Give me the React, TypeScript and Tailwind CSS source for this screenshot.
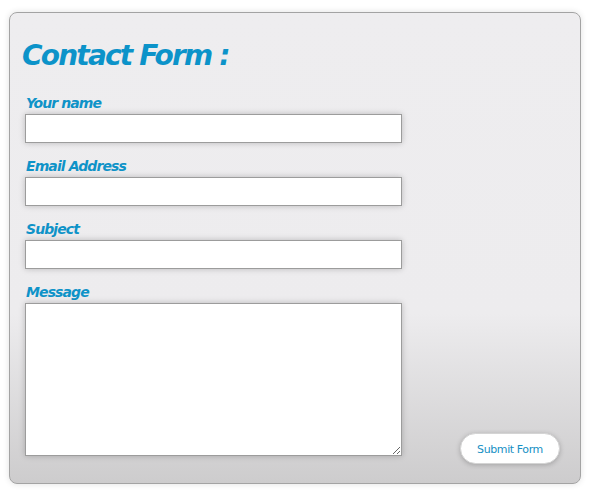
import React from 'react';

const font = { fontFamily: '"DejaVu Sans", Verdana, sans-serif' };

interface FieldProps {
  label: string;
  multiline?: boolean;
}

const Field: React.FC<FieldProps> = ({ label, multiline = false }) => {
  const box = "block w-[377px] bg-white border border-[#9c9c9c] shadow-[0_0_6px_rgba(0,0,0,0.22)] outline-none";
  return (
    <label className="flex flex-col">
      <span className="pl-[1px] pt-[1px] text-[14px] leading-[18px] font-bold italic text-[#0f93c8] tracking-[-0.9px] mb-[2px]">
        {label}
      </span>
      {multiline ? (
        <textarea className={`${box} h-[153px]`} />
      ) : (
        <input type="text" className={`${box} h-[29px]`} />
      )}
    </label>
  );
};

export default function App() {
  return (
    <div className="min-h-[494px] w-[592px] bg-white pt-3 pl-[9px]" style={font}>
      <form
        onSubmit={(e) => e.preventDefault()}
        className="w-[572px] h-[472px] rounded-lg border border-[#a3a3a3] bg-[linear-gradient(to_bottom,#eeedef_0%,#edecee_64%,#cdcccd_100%)] shadow-[0_0_6px_rgba(0,0,0,0.12)] pl-[15px] pr-5 pt-[26px] pb-[19px] flex flex-col"
      >
        <h1 className="text-[28px] leading-[34px] font-bold italic text-[#0c93c9] tracking-[-1.8px] -ml-[3px]">
          Contact Form :
        </h1>
        <div className="mt-[20px] flex flex-1">
          <div className="flex flex-col gap-[13px]">
            <Field label="Your name" />
            <Field label="Email Address" />
            <Field label="Subject" />
            <Field label="Message" multiline />
          </div>
          <div className="flex flex-1 items-end justify-end">
            <button
              type="submit"
              className="w-[100px] h-[31px] pt-[3px] rounded-full bg-white border border-[#d4d4d4] shadow-[0_1px_5px_rgba(0,0,0,0.22)] text-[11px] tracking-[-0.4px] text-[#1690c4]"
            >
              Submit Form
            </button>
          </div>
        </div>
      </form>
    </div>
  );
}
